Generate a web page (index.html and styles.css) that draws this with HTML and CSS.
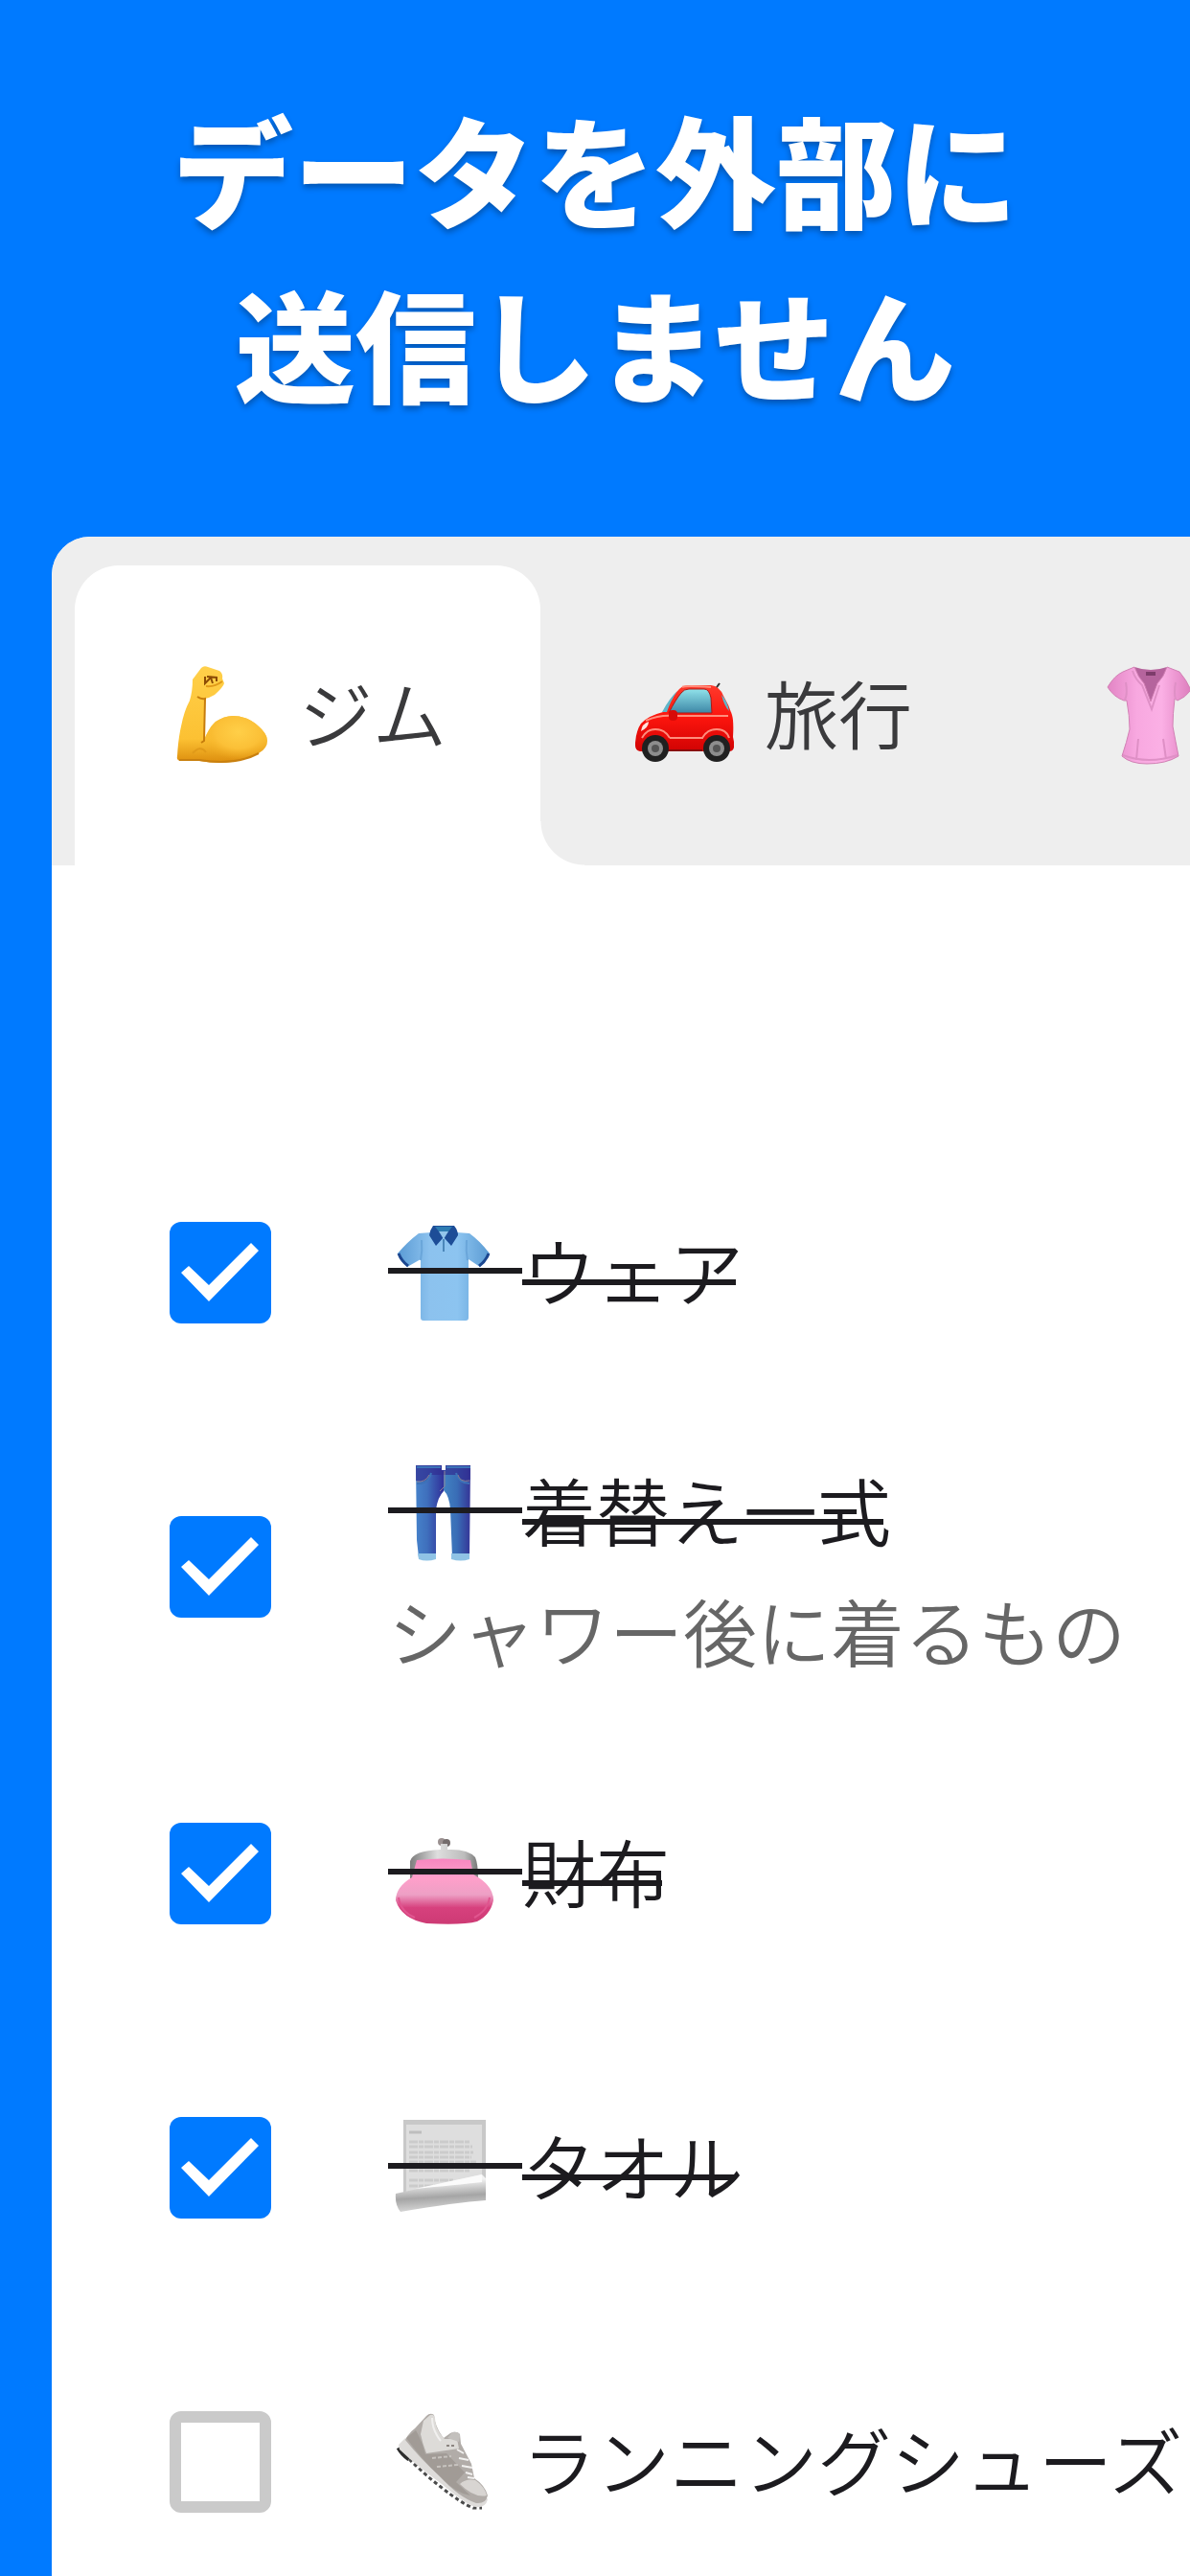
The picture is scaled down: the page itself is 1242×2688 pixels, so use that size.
FILE: index.html
```html
<!DOCTYPE html>
<html lang="ja">
<head>
    <meta charset="UTF-8">
    <meta name="viewport" content="width=device-width, initial-scale=1.0">
    <title>持ち物チェックリスト</title>
    <link rel="stylesheet" href="styles.css">
</head>
<body>

    <h1>データを外部に<br>送信しません</h1>

    <main class="panel">
        <!-- Tabs -->
        <nav class="tabs">
            <button class="tab active" type="button">
                <svg class="emoji" viewBox="0 0 104 104" aria-hidden="true">
                    <defs>
                        <linearGradient id="armSkin" x1="0" y1="0" x2="0" y2="1">
                            <stop offset="0" stop-color="#ffd04a"/>
                            <stop offset="0.75" stop-color="#fcc133"/>
                            <stop offset="1" stop-color="#dc8d0d"/>
                        </linearGradient>
                        <radialGradient id="armMuscle" cx="0.55" cy="0.35" r="0.6">
                            <stop offset="0" stop-color="#ffcf48"/>
                            <stop offset="0.6" stop-color="#fbc037"/>
                            <stop offset="1" stop-color="#f0a91f" stop-opacity="0"/>
                        </radialGradient>
                    </defs>
                    <path fill="url(#armSkin)" d="M25 14L34 2Q37-1 41 1L53 5Q57 8 56 13L58 18Q57 22 48 30Q43 33 38 34L37 77Q42 64 49 58Q58 52 67 52Q82 52 94 63Q103 71 103 78Q103 86 94 91Q76 101 52 101Q43 101 32 99H12Q8 98 9 94Q10 76 13 63Q16 47 22 36Q25 26 25 14Z"/>
                    <path fill="url(#armMuscle)" d="M36 80Q42 64 49 58Q58 52 67 52Q82 52 94 63Q103 71 103 78Q103 86 94 91Q76 100 52 100Q35 96 36 80Z"/>
                    <path fill="none" stroke="#c67c0c" stroke-width="2" d="M30 32Q34 35 38 34L37 78L34 80"/>
                    <path fill="none" stroke="#c9800f" stroke-width="2" d="M11 98L32 98Q70 104 94 91"/>
                    <path fill="none" stroke="#8b4b05" stroke-width="2" d="M38 11V18L44 12L46 18M40 11L50 12V16"/>
                    <path fill="none" stroke="#e09a19" stroke-width="2" d="M56 16Q48 22 39 21M25 91Q33 82 39 90"/>
                </svg>
                <span class="label">ジム</span>
            </button>
            <button class="tab" type="button">
                <svg class="emoji" viewBox="0 0 104 104" aria-hidden="true">
                    <defs>
                        <linearGradient id="carGlass" x1="0" y1="0" x2="0" y2="1">
                            <stop offset="0" stop-color="#90e2ea"/>
                            <stop offset="1" stop-color="#3d87a6"/>
                        </linearGradient>
                        <linearGradient id="carBody" x1="0" y1="0" x2="0" y2="1">
                            <stop offset="0" stop-color="#ff3a2c"/>
                            <stop offset="0.5" stop-color="#fb140d"/>
                            <stop offset="1" stop-color="#d10303"/>
                        </linearGradient>
                    </defs>
                    <path stroke="#333" stroke-width="2" d="M89 18L84 25"/>
                    <path fill="url(#carBody)" d="M1 80Q2 67 7 60Q14 52 30 48Q38 33 47 24Q51 20 58 20H80Q89 21 93 31Q99 41 102 51Q104 58 103 74L104 79V85Q103 89 99 89H6Q1 88 1 83Z"/>
                    <path fill="url(#carGlass)" stroke="#a91a16" d="M36 49Q43 35 49 28Q52 24 57 24H73Q78 24 80 33L81 49Z"/>
                    <path fill="#5fb6ca" d="M29 48Q37 33 45 26Q38 36 34 48ZM91 30Q97 36 99 47Q94 42 91 30Z"/>
                    <path fill="none" stroke="#ff8d7c" stroke-width="2" d="M12 57Q26 51 40 52H98M37 75H72M8 75Q13 66 22 66Q32 66 37 75M71 75Q76 66 86 66Q96 66 99 75M50 22Q54 20 80 22"/>
                    <path fill="#ffe3dd" d="M7 68Q8 60 15 58Q15 64 7 68Z"/>
                    <rect x="36" y="46" width="9" height="11" rx="4" fill="#d80b08"/>
                    <path fill="#8a0b0b" d="M36 87H71V89H36Z"/>
                    <circle cx="22" cy="86" r="14" fill="#202020"/>
                    <circle cx="22" cy="86" r="8" fill="#8d8d8d"/>
                    <circle cx="22" cy="86" r="4" fill="#555"/>
                    <circle cx="86" cy="86" r="14" fill="#202020"/>
                    <circle cx="86" cy="86" r="8" fill="#8d8d8d"/>
                    <circle cx="86" cy="86" r="4" fill="#555"/>
                </svg>
                <span class="label">旅行</span>
            </button>
            <button class="tab" type="button" aria-label="服">
                <svg class="emoji" viewBox="0 0 104 104" aria-hidden="true">
                    <defs>
                        <linearGradient id="blouse" x1="0" y1="0" x2="1" y2="0">
                            <stop offset="0" stop-color="#e285c4"/>
                            <stop offset="0.35" stop-color="#f8a8e0"/>
                            <stop offset="0.65" stop-color="#fbb0e5"/>
                            <stop offset="1" stop-color="#dd7dbd"/>
                        </linearGradient>
                    </defs>
                    <path fill="#b5649d" d="M36 1Q53 7 70 1L64 20L53 38L42 18Z"/>
                    <path fill="url(#blouse)" stroke="#d180b4" d="M36 1Q40 12 46 18L53 37L60 18Q67 11 70 1L83 6Q90 14 95 25Q89 33 81 36L78 34Q76 50 76 63Q79 79 82 94Q69 102 49 102Q32 102 23 94Q28 79 31 66Q31 52 28 36L25 36Q14 32 8 22Q15 10 24 6Z"/>
                    <path fill="none" stroke="#df90c6" stroke-width="2" d="M26 35Q29 30 27 17M79 35Q77 28 79 17M24 93Q50 103 81 93M40 76L38 98M66 76L69 97M34 5Q37 14 44 20L54 45L62 20"/>
                    <rect x="48" y="6" width="10" height="4" fill="#7d3c6b"/>
                </svg>
            </button>
        </nav>

        <!-- Items -->
        <ul class="list">
            <li class="row">
                <input class="check" type="checkbox" id="item1" checked>
                <label class="item" for="item1">
                    <span class="title">
                        <span class="icon">
                            <svg class="emoji" viewBox="0 0 104 104" aria-hidden="true">
                                <defs>
                                    <linearGradient id="polo" x1="0" y1="0" x2="1" y2="0">
                                        <stop offset="0" stop-color="#5a9bd5"/>
                                        <stop offset="0.35" stop-color="#8cc2ee"/>
                                        <stop offset="0.65" stop-color="#8cc4f0"/>
                                        <stop offset="1" stop-color="#5b9bd3"/>
                                    </linearGradient>
                                </defs>
                                <path fill="url(#polo)" d="M39 9L26 10Q14 19 4 31L14 45L28 37V98Q28 101 31 101H75Q78 101 78 98V37L90 45L100 31Q90 18 79 10L66 9Z"/>
                                <path fill="none" stroke="#1c4790" stroke-width="3" d="M5 31Q8 39 15 44M99 31Q96 39 89 44"/>
                                <path fill="none" stroke="#6aa6da" stroke-width="2" d="M29 17Q30 28 28 38M76 17Q75 28 77 38"/>
                                <path fill="#1d4d97" d="M41 2H63Q67 7 67 12L60 23L52 14L44 23L37 12Q38 6 41 2Z"/>
                                <path fill="#2e7cb2" d="M43 3H61L57 8H47Z"/>
                                <path fill="#92c5ea" d="M47 8H57L52 16Z"/>
                                <path stroke="#4b87ba" stroke-width="2" d="M52 16V29"/>
                            </svg>
                        </span><span class="name">ウェア</span>
                    </span>
                </label>
            </li>
            <li class="row">
                <input class="check" type="checkbox" id="item2" checked>
                <label class="item" for="item2">
                    <span class="title">
                        <span class="icon">
                            <svg class="emoji" viewBox="0 0 104 104" aria-hidden="true">
                                <defs>
                                    <linearGradient id="denimLeft" x1="0" y1="0" x2="1" y2="0">
                                        <stop offset="0" stop-color="#4682ca"/>
                                        <stop offset="0.4" stop-color="#3f70bd"/>
                                        <stop offset="1" stop-color="#30309a"/>
                                    </linearGradient>
                                    <linearGradient id="denimRight" x1="0" y1="0" x2="1" y2="0">
                                        <stop offset="0" stop-color="#4282c2"/>
                                        <stop offset="0.5" stop-color="#396db6"/>
                                        <stop offset="1" stop-color="#353597"/>
                                    </linearGradient>
                                </defs>
                                <path fill="url(#denimLeft)" d="M23 2H50V7H52V29Q46 35 44 48V98H26L24 80Z"/>
                                <path fill="url(#denimRight)" d="M52 7H54V2H80L79 98H61L59 48Q58 34 52 28Z"/>
                                <path fill="#302e91" fill-opacity="0.7" d="M23 2H50V7H54V2H80V17Q68 22 66 12H38Q36 22 23 18Z"/>
                                <path fill="none" stroke="#3c72b8" stroke-width="2" d="M24 4H49M55 4H80M24 21Q36 22 39 10M79 21Q67 20 65 10"/>
                                <path fill="none" stroke="#8c8093" d="M53 8V24L48 29M24 19Q33 20 37 12M79 18Q69 20 67 12"/>
                                <path fill="#8fc3e5" d="M25 94H44V100Q34 103 26 100ZM60 94H79V100Q70 103 60 100Z"/>
                            </svg>
                        </span><span class="name">着替え一式</span>
                    </span>
                    <span class="memo">シャワー後に着るもの</span>
                </label>
            </li>
            <li class="row">
                <input class="check" type="checkbox" id="item3" checked>
                <label class="item" for="item3">
                    <span class="title">
                        <span class="icon">
                            <svg class="emoji" viewBox="0 0 104 104" aria-hidden="true">
                                <defs>
                                    <linearGradient id="purse" x1="0" y1="0" x2="0" y2="1">
                                        <stop offset="0" stop-color="#f787c0"/>
                                        <stop offset="0.3" stop-color="#ff9fca"/>
                                        <stop offset="0.55" stop-color="#eda0c5"/>
                                        <stop offset="0.75" stop-color="#d7417e"/>
                                        <stop offset="1" stop-color="#cd3a74"/>
                                    </linearGradient>
                                    <linearGradient id="clasp" x1="0" y1="0" x2="1" y2="0">
                                        <stop offset="0" stop-color="#7d7d7d"/>
                                        <stop offset="0.4" stop-color="#dedede"/>
                                        <stop offset="0.8" stop-color="#bcbcbc"/>
                                        <stop offset="1" stop-color="#777"/>
                                    </linearGradient>
                                </defs>
                                <circle cx="50" cy="18" r="4" fill="#9a9090"/>
                                <circle cx="55" cy="19" r="4" fill="#746c6c"/>
                                <path fill="url(#clasp)" d="M49 20H56V26Q77 25 85 34Q88 41 88 56H17V38Q20 27 49 26Z"/>
                                <path fill="url(#purse)" d="M24 37Q50 34 80 37L83 52Q104 63 104 79Q101 94 87 101Q72 105 34 103Q8 98 2 79Q2 65 19 55Z"/>
                                <path fill="none" stroke="#e0558f" stroke-width="2" d="M5 76Q7 91 22 97M100 76Q98 90 84 97"/>
                            </svg>
                        </span><span class="name">財布</span>
                    </span>
                </label>
            </li>
            <li class="row">
                <input class="check" type="checkbox" id="item4" checked>
                <label class="item" for="item4">
                    <span class="title">
                        <span class="icon">
                            <svg class="emoji" viewBox="0 0 104 104" aria-hidden="true">
                                <defs>
                                    <linearGradient id="roll" x1="0.4" y1="0" x2="0.55" y2="1">
                                        <stop offset="0.2" stop-color="#f2f2f2"/>
                                        <stop offset="0.6" stop-color="#a5a5a5"/>
                                        <stop offset="1" stop-color="#dedede"/>
                                    </linearGradient>
                                </defs>
                                <path fill="#c8c8c8" d="M10 1H96V85L10 82Z"/>
                                <path fill="#dedede" d="M13 6H92V70L13 79Z"/>
                                <path stroke="#bebebe" stroke-width="3" d="M16 14H29"/>
                                <path fill="none" stroke="#cbcbcb" stroke-width="3" stroke-dasharray="9 1 5 1" d="M16 24H80M16 29H82M16 35H83M16 40H81M16 45H86M16 50H86M16 54H80M16 64H62M16 70H45"/>
                                <path fill="url(#roll)" d="M2 78L92 58L96 62V85Q65 87 7 97Q1 90 2 78Z"/>
                                <path fill="#fbfbfb" d="M22 73L92 58V66Q65 69 22 73Z"/>
                            </svg>
                        </span><span class="name">タオル</span>
                    </span>
                </label>
            </li>
            <li class="row">
                <input class="check" type="checkbox" id="item5">
                <label class="item" for="item5">
                    <span class="title">
                        <span class="icon">
                            <svg class="emoji" viewBox="0 0 104 104" aria-hidden="true">
                                <path fill="none" stroke="#2d2d2d" stroke-width="5" d="M5 36Q9 43 16 48"/>
                                <path fill="none" stroke="#4a4a4a" stroke-width="3" stroke-dasharray="4 3" d="M16 48Q32 64 49 77Q70 94 83 99L92 99"/>
                                <path fill="#dedcda" d="M5 33L12 26L94 84L98 90Q96 98 88 98Q79 99 50 74Q25 56 6 38Z"/>
                                <path fill="#b1aca8" d="M12 28Q16 20 22 16L34 3Q38-1 42 2Q43 15 52 26L59 21Q65 18 69 22L70 32L81 53L84 68Q95 75 98 86Q96 95 86 94Q68 88 48 66Q29 49 12 28Z"/>
                                <path fill="#9a948f" d="M13 26L23 18Q30 30 33 43L55 42L74 62L65 72L80 86Q65 84 49 67Q28 47 13 26Z" fill-opacity="0.7"/>
                                <path fill="#dddbd8" d="M31 8L38 2Q42 1 43 5Q43 17 53 27H66L68 37L34 42Q30 32 28 22Z"/>
                                <path fill="#c3c0bd" d="M56 26L61 20Q69 19 69 24L68 30Z"/>
                                <path fill="none" stroke="#f1f0ef" stroke-width="2" d="M40 5Q40 18 49 29M66 38L73 42M68 47L78 49M71 55L82 57M75 62L82 64M77 67L84 68"/>
                                <path fill="#d8d5d2" d="M69 74Q75 68 85 70Q95 77 97 86Q84 89 69 74Z"/>
                                <path fill="none" stroke="#c7c3bf" stroke-width="2" stroke-dasharray="4 2" d="M40 47L60 45M45 56L67 54"/>
                                <path stroke="#8b8580" stroke-width="2" d="M55 34H64" stroke-dasharray="3 2"/>
                            </svg>
                        </span><span class="name">ランニングシューズ</span>
                    </span>
                </label>
            </li>
        </ul>
    </main>

</body>
</html>
```
FILE: styles.css
```css
* {
    box-sizing: border-box;
}

body {
    font-family: "Noto Sans CJK JP", sans-serif;
    display: flex;
    flex-direction: column;
    height: 100vh;
    margin: 0;
    overflow: hidden;
    background-color: #007aff;
}

h1 {
    margin: 0;
    padding: 83px 0 113px;
    text-align: center;
    font-size: 126px;
    font-weight: 900;
    line-height: 182px;
    color: #fff;
    text-shadow: 0 4px 6px rgba(0, 0, 0, 0.3);
}

.panel {
    flex: 1;
    min-height: 0;
    margin-left: 54px;
    overflow: hidden;
    background-color: #fff;
    border-top-left-radius: 40px;
}

.emoji {
    flex: none;
    display: block;
    width: 104px;
    height: 104px;
}

/* Tabs */
.tabs {
    display: flex;
    padding: 30px 0 0 24px;
    background-color: #eee;
}

.tab {
    position: relative;
    flex: none;
    display: flex;
    align-items: center;
    gap: 32px;
    height: 313px;
    padding: 0 98px;
    border: 0;
    background: none;
    font-family: inherit;
    font-size: 77px;
    font-weight: 350;
    line-height: 118px;
    color: #3a3a3c;
    cursor: pointer;
}

.tab.active {
    background-color: #fff;
    border-radius: 46px 46px 0 0;
}

/* rounded inner corner between the active tab and the bar */
.tab.active::after {
    content: "";
    position: absolute;
    left: 100%;
    bottom: 0;
    width: 46px;
    height: 46px;
    background: radial-gradient(circle at 100% 0, transparent 45px, #fff 46px);
}

/* the glyphs sit low in their line box */
.label,
.name,
.memo {
    padding-bottom: 8px;
}

/* List */
.list {
    list-style: none;
    margin: 0;
    padding: 272px 0 0;
}

.row {
    display: flex;
    align-items: center;
    gap: 122px;
    min-height: 307px;
    padding: 34px 0 34px 123px;
}

.check {
    appearance: none;
    flex: none;
    align-self: flex-start;
    width: 106px;
    height: 106px;
    margin: 66px 0 0;
    border: 12px solid #cacaca;
    border-radius: 12px;
    cursor: pointer;
}

.check:checked {
    border: 0;
    background-color: #007aff;
}

.check:checked::before {
    content: "";
    display: block;
    height: 100%;
    background-color: #fff;
    clip-path: polygon(12px 53px, 20px 46px, 41px 66px, 85px 22px, 93px 30px, 41px 83px);
}

.item {
    display: flex;
    flex-direction: column;
    font-size: 77px;
    font-weight: 350;
    line-height: 118px;
    white-space: nowrap;
    color: #1c1b1f;
}

.title {
    display: flex;
    align-items: center;
}

.icon,
.name {
    position: relative;
}

.icon {
    width: 140px;
    padding-left: 6px;
}

/* strike lines, drawn over the icon and over the name */
.check:checked + .item .icon::after,
.check:checked + .item .name::after {
    content: "";
    position: absolute;
    left: 0;
    height: 6px;
    background-color: #1c1b1f;
}

.check:checked + .item .icon::after {
    right: 0;
    top: calc(50% - 6px);
}

.check:checked + .item .name::after {
    right: 8px;
    top: calc(50% + 6px);
}

.memo {
    color: #666;
}
```
